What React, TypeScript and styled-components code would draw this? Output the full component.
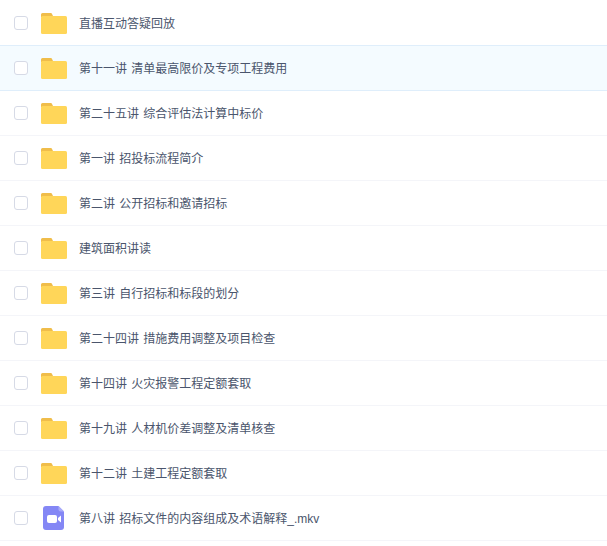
import styled, { createGlobalStyle } from "styled-components"

const GlobalStyle = createGlobalStyle`
    html, body {
        margin: 0;
        padding: 0;
        background: #fff;
    }
`

const List = styled.div`
    width: 607px;
    height: 546px;
    overflow: hidden;
    padding-top: 1px;
    box-sizing: border-box;
    font-family: "Liberation Sans", "Noto Sans CJK SC", sans-serif;
`

const Row = styled.div<{ $active?: boolean }>`
    display: flex;
    align-items: center;
    height: 45px;
    box-sizing: border-box;
    padding-left: 14px;
    border-bottom: 1px solid ${(p) => (p.$active ? "#dfeefb" : "#f4f5f9")};
    box-shadow: ${(p) => (p.$active ? "0 -1px 0 #dfeefb" : "none")};
    background: ${(p) => (p.$active ? "#f4fbff" : "#fff")};
`

const Checkbox = styled.span`
    width: 14px;
    height: 14px;
    box-sizing: border-box;
    border: 1px solid #d6dae6;
    border-radius: 3px;
    background: #fff;
    flex-shrink: 0;
`

const IconSlot = styled.span`
    display: flex;
    align-items: center;
    justify-content: center;
    width: 27px;
    height: 28px;
    margin-left: 13px;
    flex-shrink: 0;
`

const VideoSvg = styled.svg`
    margin-right: 2px;
`

const Name = styled.span`
    margin-left: 11px;
    padding-top: 2px;
    font-size: 12px;
    line-height: 16px;
    word-spacing: 1px;
    color: #4a556c;
    white-space: nowrap;
`

const FolderIcon = () => (
    <svg width="27" height="21" viewBox="0 0 27 21">
        <path d="M0 4V1.500A1.500 1.500 0 0 1 1.500 0h8.500a1 1 0 0 1 .8.4L12 3v1z" fill="#f0bd4a" />
        <rect x="0" y="3" width="26" height="18" rx="1.500" fill="#ffd659" />
    </svg>
)

const VideoIcon = () => (
    <VideoSvg width="21" height="24" viewBox="0 0 21 24">
        <path d="M3 0h12.500L21 5.500V21a3 3 0 0 1-3 3H3a3 3 0 0 1-3-3V3a3 3 0 0 1 3-3z" fill="#8487f5" />
        <path d="M15.500 0L21 5.500h-3.500a2 2 0 0 1-2-2z" fill="#a9abf9" />
        <rect x="4" y="9" width="10" height="8" rx="2" fill="#fff" />
        <path d="M15 12l3-2.500v7L15 14z" fill="#fff" />
    </VideoSvg>
)

const files = [
    { name: "直播互动答疑回放" },
    { name: "第十一讲 清单最高限价及专项工程费用", active: true },
    { name: "第二十五讲 综合评估法计算中标价" },
    { name: "第一讲 招投标流程简介" },
    { name: "第二讲 公开招标和邀请招标" },
    { name: "建筑面积讲读" },
    { name: "第三讲 自行招标和标段的划分" },
    { name: "第二十四讲 措施费用调整及项目检查" },
    { name: "第十四讲 火灾报警工程定额套取" },
    { name: "第十九讲 人材机价差调整及清单核查" },
    { name: "第十二讲 土建工程定额套取" },
    { name: "第八讲 招标文件的内容组成及术语解释_.mkv", video: true },
]

const App = () => {
    return (
        <List>
            <GlobalStyle />
            {files.map((file) => (
                <Row key={file.name} $active={file.active}>
                    <Checkbox />
                    <IconSlot>{file.video ? <VideoIcon /> : <FolderIcon />}</IconSlot>
                    <Name>{file.name}</Name>
                </Row>
            ))}
        </List>
    )
}

export default App
